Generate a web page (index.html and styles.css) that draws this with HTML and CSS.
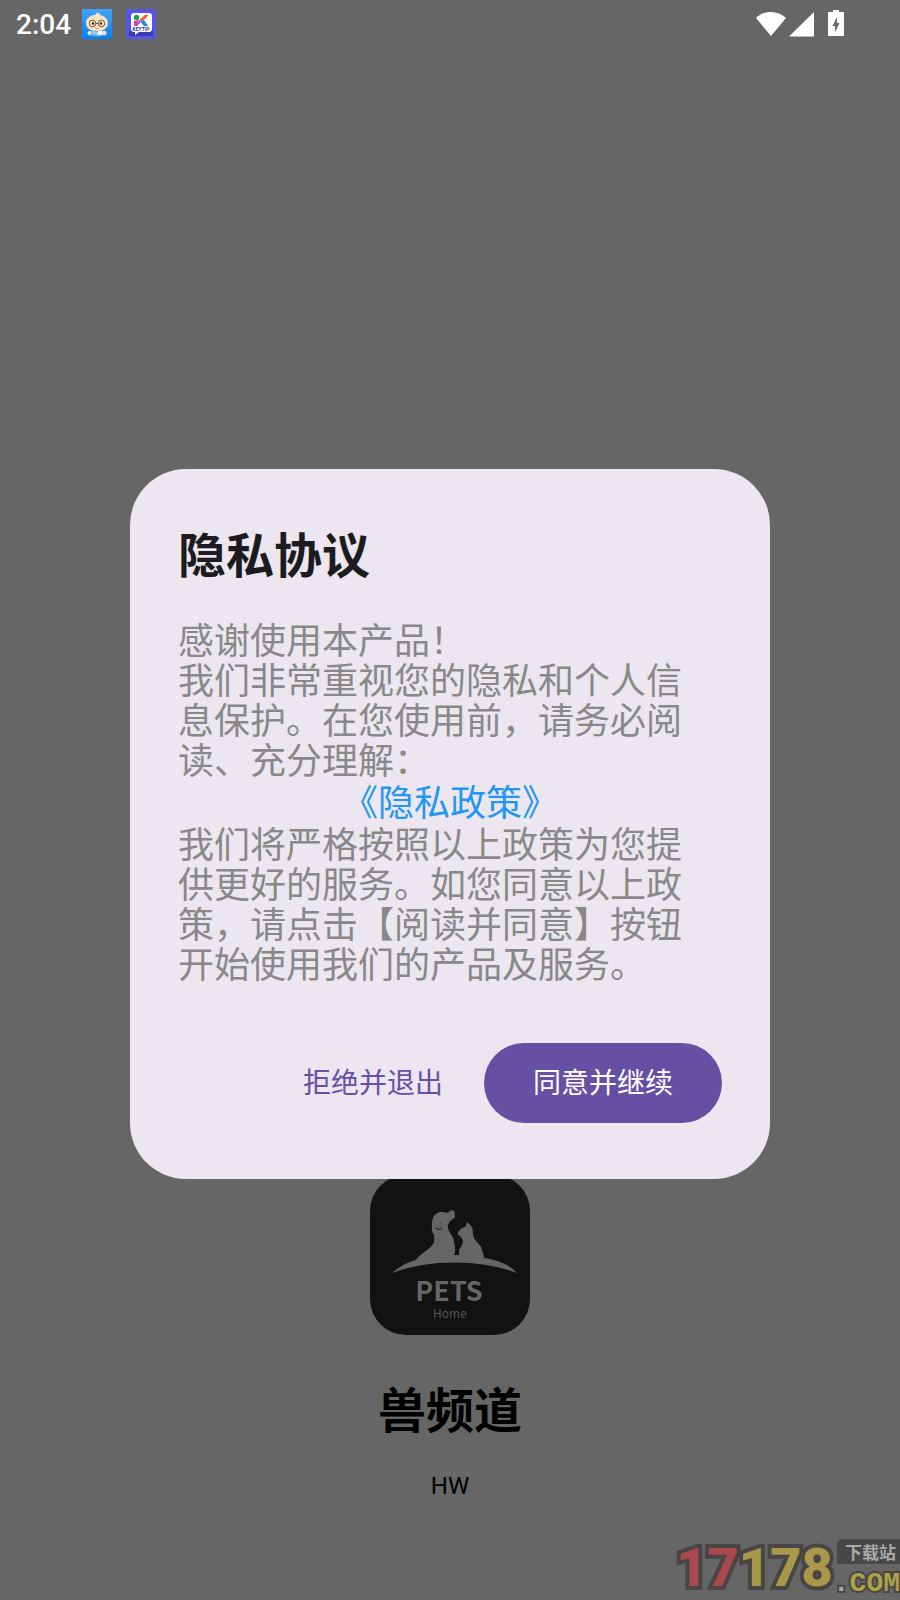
FILE: index.html
```html
<!DOCTYPE html>
<html lang="zh-CN">
<head>
<meta charset="utf-8">
<meta name="viewport" content="width=device-width, initial-scale=1">
<title>隐私协议</title>
<link rel="stylesheet" href="styles.css">
</head>
<body>
<div class="screen">
  <header class="status">
    <time class="status-time">2:04</time>
    <div class="status-apps">
      <svg width="30" height="30" viewBox="0 0 30 30" aria-hidden="true">
        <defs><linearGradient id="sky" x1="0" y1="0" x2="0" y2="1"><stop offset="0" stop-color="#43a3f6"/><stop offset="1" stop-color="#087ff0"/></linearGradient></defs>
        <rect width="30" height="30" fill="url(#sky)"/>
        <path d="M7 22q8-4 16 0l1 4q-9 3-18 0z" fill="#4ba9f0"/>
        <path d="M15 4c2-1 3 1 3 2 5 1 8 4 8 8 0 5-4 8-11 8S4 19 4 14c0-4 3-7 8-8 2 0 1-1 3-2z" fill="#f8e3bd"/>
        <circle cx="10.500" cy="14.500" r="3.200" fill="#fff1d5" stroke="#6b4a32"/>
        <circle cx="19.500" cy="14.500" r="3.200" fill="#fff1d5" stroke="#6b4a32"/>
        <path d="M14 14.500h2" stroke="#6b4a32"/>
        <circle cx="11" cy="14.500" r="1.300" fill="#3a2a20"/><circle cx="19" cy="14.500" r="1.300" fill="#3a2a20"/>
        <path d="M13 19q2 1.500 4 0" fill="none" stroke="#d0805a" stroke-width=".8"/>
        <circle cx="7.500" cy="24" r="2" fill="#f8dfb4"/><circle cx="22.500" cy="24" r="2.200" fill="#f8dfb4"/>
        <path d="M10 22l5 1v3l-5-1z" fill="#8fd0f5"/><path d="M15.500 22.500l5-1v4l-5 1z" fill="#fff"/>
      </svg>
      <svg width="30" height="30" viewBox="0 0 30 30" aria-hidden="true">
        <rect width="30" height="30" rx="3" fill="#5556e6"/>
        <path d="M3 22h2v-2h2v2h16v-2h4v7H3z" fill="#383aae"/>
        <path d="M8 4h15a3 3 0 0 1 3 3v13a3 3 0 0 1-3 3H13l-4 3v-3H8a3 3 0 0 1-3-3V7a3 3 0 0 1 3-3z" fill="#fff"/>
        <circle cx="10.500" cy="8.500" r="2.700" fill="#15a45a"/>
        <path d="M8 17v-5l5-1-1 3z" fill="#e23b96"/><path d="M8 17l4-3 2-3v3l-3 3z" fill="#7a45dd"/>
        <path d="M13 11l6-5h3l-4 5-4 1z" fill="#ff681f"/><path d="M19 6h3l-3 4z" fill="#f83c45"/>
        <path d="M14 12l4-1 4 6h-4z" fill="#2483ec"/>
        <text x="15" y="22" text-anchor="middle" font-family="Roboto, sans-serif" font-size="5" font-weight="700" fill="#3537a8">KEYTIP</text>
      </svg>
    </div>
    <div class="status-system">
      <svg width="88" height="28" viewBox="0 0 88 28" role="img" aria-label="Wi-Fi, 信号, 充电中">
        <path d="M0 8C8 0 22 0 30 8L15 26z" fill="#fff"/>
        <path d="M33 26.500L58 2v24.500z" fill="#fff"/>
        <path fill-rule="evenodd" d="M77 0h6v2h4q1 0 1 1v22q0 1-1 1H73q-1 0-1-1V3q0-1 1-1h4zM81 7l-4.500 9H79v6l4.500-9H81z" fill="#fff"/>
      </svg>
    </div>
  </header>

  <main class="stage">
    <section class="splash">
      <svg class="splash-logo" viewBox="0 0 160 160" role="img" aria-label="PETS Home">
        <rect width="160" height="160" rx="36" fill="#121212"/>
        <path fill="#666" d="M22 98C30 91 38 87 46 85C50 78 60 75 63 69C65 66 64 62 64 60C61 57 62 52 62 48C62 42 65 38 71 37C75 37 78 39 80 36L82 35L84 36L85 38C84 40 86 42 84 43C82 45 80 45 79 48C77 51 78 52 78 53C79 58 83 60 84 67C85 72 86 76 84 80H89C89 76 89 74 92 70C94 66 92 63 90 61C88 60 87 59 88 58C89 55 91 54 92 53C94 52 96 52 96 50L97 47L101 51C104 55 102 58 104 63C107 68 111 70 112 75C113 78 114 80 114 83C128 85 140 90 147 98C110 84 60 84 22 98z"/>
        <path d="M69 47C73 49 73 53 70 54C68 54 66 53 65 51C66 56 70 55 72 54V51C72 49 71 47 69 47z" fill="#121212"/>
        <text x="79" y="126" text-anchor="middle" class="logo-name">PETS</text>
        <text x="80" y="143" text-anchor="middle" class="logo-sub">Home</text>
      </svg>
      <h1 class="splash-name">兽频道</h1>
      <p class="splash-brand">HW</p>
    </section>

    <section class="dialog" role="dialog" aria-modal="true" aria-labelledby="dialog-title">
      <h2 class="dialog-title" id="dialog-title">隐私协议</h2>
      <div class="dialog-body">
        <p class="dialog-text">感谢使用本产品！<br>我们非常重视您的隐私和个人信息保护。在您使用前，请务必阅读、充分理解：</p>
        <a class="dialog-link" href="#policy">《隐私政策》</a>
        <p class="dialog-text">我们将严格按照以上政策为您提供更好的服务。如您同意以上政策，请点击【阅读并同意】按钮开始使用我们的产品及服务。</p>
      </div>
      <div class="dialog-actions">
        <button class="button" type="button">拒绝并退出</button>
        <button class="button button-primary" type="button">同意并继续</button>
      </div>
    </section>
  </main>

  <aside class="mark">
    <span class="mark-digits"><span class="mark-red">17</span>178</span>
    <span class="mark-side">
      <span class="mark-tag">下载站</span>
      <span class="mark-com"><span class="mark-dot">.</span>COM</span>
    </span>
  </aside>
</div>
</body>
</html>
```

FILE: styles.css
```css
* {
  box-sizing: border-box;
}

body {
  margin: 0;
  background: #666;
  font-family: Roboto, "Noto Sans CJK SC", sans-serif;
}

h1,
h2,
p {
  margin: 0;
}

.screen {
  position: relative;
  display: flex;
  flex-direction: column;
  min-height: 100vh;
}

.status {
  display: flex;
  align-items: center;
  height: 48px;
  padding: 0 56px 0 16px;
  color: #fff;
}

.status svg {
  display: block;
}

.status-time {
  padding-top: 2px;
  font-size: 28px;
  font-weight: 500;
  line-height: 32px;
}

.status-apps {
  display: flex;
  gap: 14px;
  margin-left: 11px;
}

.status-system {
  margin-left: auto;
}

.stage {
  flex: 1;
  display: grid;
  grid-template-columns: 1fr;
}

.splash,
.dialog {
  grid-area: 1 / 1;
}

.splash {
  align-self: end;
  display: flex;
  flex-direction: column;
  align-items: center;
  padding-bottom: 100px;
  color: #000;
}

.splash-logo {
  width: 160px;
  height: 160px;
}

.logo-name {
  font: 700 27px "Noto Sans CJK SC", sans-serif;
  fill: #666;
}

.logo-sub {
  font: 400 12px "Noto Sans CJK SC", sans-serif;
  fill: #555;
}

.splash-name {
  margin-top: 36px;
  font: 700 48px/72px "Noto Sans CJK SC", sans-serif;
}

.splash-brand {
  margin-top: 29px;
  font-size: 24px;
  line-height: 28px;
}

.dialog {
  place-self: center;
  width: calc(100% - 260px);
  min-width: 320px;
  max-width: 640px;
  padding: 48px 48px 56px;
  border-radius: 56px;
  background: #ebe6f0;
  font-family: "Noto Sans CJK SC", sans-serif;
  z-index: 1;
}

.dialog-title {
  color: #1d1b20;
  font-size: 48px;
  line-height: 70px;
}

.dialog-body {
  display: flex;
  flex-direction: column;
  margin-top: 31px;
  font-size: 36px;
}

.dialog-text {
  padding-right: 24px;
  color: #888;
  line-height: 40px;
}

.dialog-link {
  align-self: center;
  color: #2196f3;
  line-height: 44px;
  text-decoration: none;
}

.dialog-actions {
  display: flex;
  justify-content: flex-end;
  flex-wrap: wrap;
  gap: 16px;
  margin-top: 61px;
}

.button {
  height: 80px;
  padding: 0 25px 4px;
  border: 0;
  border-radius: 40px;
  background: transparent;
  color: #6750a4;
  font: 400 28px "Noto Sans CJK SC", sans-serif;
}

.button-primary {
  padding: 0 49px 4px;
  background: #6750a4;
  color: #fff;
}

.mark {
  position: absolute;
  right: 0;
  bottom: 0;
  display: flex;
  align-items: flex-end;
  color: #a9984a;
}

.mark-digits {
  font: 900 54px/64px Roboto, sans-serif;
  -webkit-text-stroke: 8px #494545;
  paint-order: stroke fill;
}

.mark-red {
  color: #a9484f;
}

.mark-side {
  display: flex;
  flex-direction: column;
  align-items: flex-end;
  gap: 4px;
}

.mark-tag {
  padding: 0 4px 0 8px;
  border-radius: 6px 0 0 0;
  background: #494747;
  color: #aaa;
  font: 700 17px/25px "Noto Sans CJK SC", sans-serif;
}

.mark-com {
  color: #aaa044;
  font: 700 28px/32px "Liberation Mono", monospace;
  -webkit-text-stroke: 4px #494545;
  paint-order: stroke fill;
}

.mark-dot {
  color: #aaa;
}
```
